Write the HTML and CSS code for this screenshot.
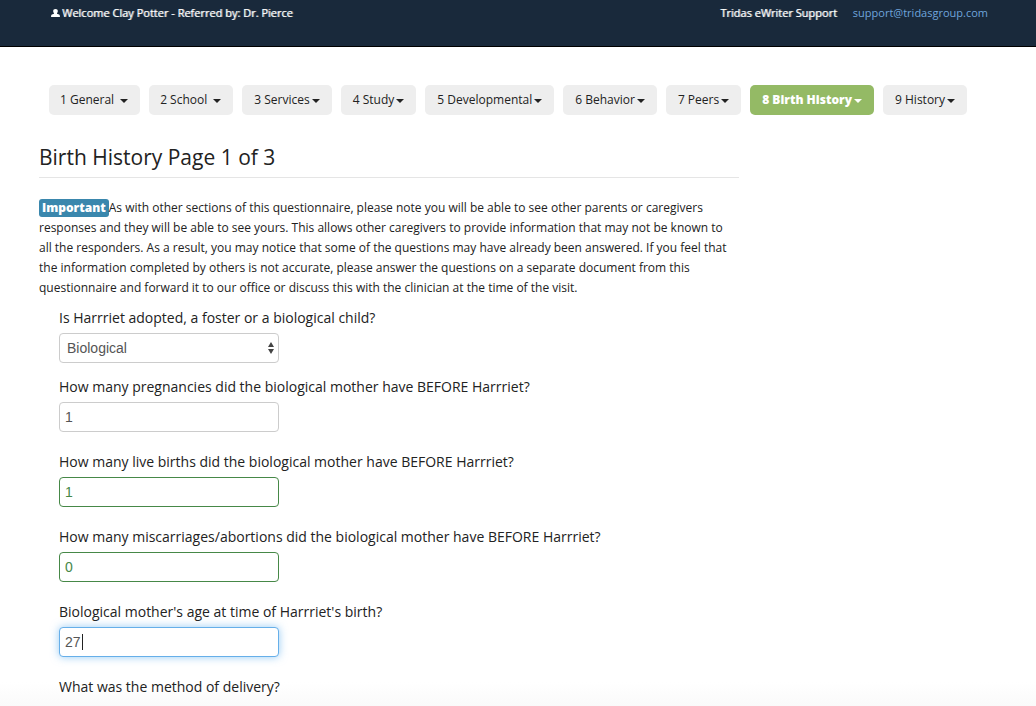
FILE: index.html
```html
<!DOCTYPE html>
<html lang="en">
<head>
<meta charset="utf-8">
<meta name="viewport" content="width=device-width, initial-scale=1">
<title>Birth History</title>
<link rel="stylesheet" href="styles.css">
</head>
<body>
<header class="topbar">
  <div class="welcome">
    <svg class="user-icon" viewBox="0 0 10 9" aria-hidden="true"><path d="M5 0C3.300 0 2.300 1 2.400 2.600c.1 1.200.5 1.700.9 2.200v.6L1 6.300C.3 6.700 0 7.300 0 9h10c0-1.700-.3-2.300-1-2.700L6.700 5.400v-.6c.4-.5.8-1 .9-2.200C7.700 1 6.700 0 5 0z"/></svg>
    <span>Welcome Clay Potter - Referred by: Dr. Pierce</span>
  </div>
  <div class="support">
    <span>Tridas eWriter Support</span>
    <a href="mailto:support@tridasgroup.com">support@tridasgroup.com</a>
  </div>
</header>
<main class="page">
  <nav class="tabs">
    <button type="button" class="tab spaced">1 General<span class="arrow"></span></button>
    <button type="button" class="tab spaced">2 School<span class="arrow"></span></button>
    <button type="button" class="tab">3 Services<span class="arrow"></span></button>
    <button type="button" class="tab">4 Study<span class="arrow"></span></button>
    <button type="button" class="tab">5 Developmental<span class="arrow"></span></button>
    <button type="button" class="tab">6 Behavior<span class="arrow"></span></button>
    <button type="button" class="tab">7 Peers<span class="arrow"></span></button>
    <button type="button" class="tab active">8 Birth History<span class="arrow"></span></button>
    <button type="button" class="tab">9 History<span class="arrow"></span></button>
  </nav>
  <section class="content">
    <h1 class="title">Birth History Page 1 of 3</h1>
    <p class="notice"><strong class="badge">Important</strong>As with other sections of this questionnaire, please note you will be able to see other parents or caregivers responses and they will be able to see yours. This allows other caregivers to provide information that may not be known to all the responders. As a result, you may notice that some of the questions may have already been answered. If you feel that the information completed by others is not accurate, please answer the questions on a separate document from this questionnaire and forward it to our office or discuss this with the clinician at the time of the visit.</p>
    <form class="questions">
      <div class="field select-field">
        <label for="adopted">Is Harrriet adopted, a foster or a biological child?</label>
        <div class="select-wrap">
          <select id="adopted" class="control"><option>Biological</option></select>
          <svg class="stepper" viewBox="0 0 6 12" aria-hidden="true"><path d="M3 0l3 5H0zM3 12l3-5H0z"/></svg>
        </div>
      </div>
      <div class="field">
        <label for="pregnancies">How many pregnancies did the biological mother have BEFORE Harrriet?</label>
        <input id="pregnancies" class="control" type="text" value="1">
      </div>
      <div class="field">
        <label for="births">How many live births did the biological mother have BEFORE Harrriet?</label>
        <input id="births" class="control valid" type="text" value="1">
      </div>
      <div class="field">
        <label for="losses">How many miscarriages/abortions did the biological mother have BEFORE Harrriet?</label>
        <input id="losses" class="control valid" type="text" value="0">
      </div>
      <div class="field">
        <label for="age">Biological mother's age at time of Harrriet's birth?</label>
        <div class="select-wrap">
          <input id="age" class="control focused" type="text" value="27">
          <span class="text-cursor"></span>
        </div>
      </div>
      <div class="question">What was the method of delivery?</div>
    </form>
  </section>
</main>
</body>
</html>
```
FILE: styles.css
```css
* { box-sizing: border-box; }
body {
  margin: 0;
  min-height: 100vh;
  background: linear-gradient(to top, #fafafa, #fff 24px);
  color: #222;
  font: 14px/20px "Open Sans", sans-serif;
}
.topbar {
  display: flex;
  justify-content: space-between;
  height: 47px;
  padding: 3px 48px 0 51px;
  background: #19293b;
  border-bottom: 1px solid #000;
  color: #fff;
  font-size: 11px;
}
.welcome { display: flex; gap: 2px; }
.welcome span, .support span { text-shadow: 1px 0 0 rgba(255, 255, 255, 0.6); }
.user-icon { width: 9px; height: 8px; margin-top: 6px; fill: #fff; }
.support { display: flex; gap: 16px; }
.support a { color: #6fa5dc; text-decoration: none; }
.page { padding: 38px 39px 0; }
.tabs { display: flex; flex-wrap: wrap; gap: 9px; padding-left: 10px; }
.tab {
  display: flex;
  align-items: center;
  height: 30px;
  padding: 0 12px;
  border: 0;
  border-radius: 5px;
  background: #eee;
  color: #222;
  font: 12px/20px "Open Sans", sans-serif;
  white-space: nowrap;
}
.arrow {
  margin: 2px 0 0 2px;
  border: 4px solid transparent;
  border-top-color: currentColor;
  border-bottom: 0;
}
.spaced { padding: 0 12px 0 11px; }
.spaced .arrow { margin-left: 6px; }
.tab.active { background: #94ba65; color: #fff; font-weight: 800; }
.content { max-width: 700px; }
.title {
  margin: 27px 0 19px;
  padding-bottom: 5px;
  border-bottom: 1px solid #e5e5e5;
  font-size: 21px;
  font-weight: 400;
  line-height: 30px;
}
.notice { margin: 0; padding: 1px 8px 0 0; font-size: 12px; }
.badge {
  display: inline-block;
  padding: 0 3px;
  border-radius: 3px;
  background: #3a87ad;
  color: #fff;
  font-weight: 800;
  line-height: 18px;
}
.questions { padding: 10px 0 0 20px; }
.field { display: flex; flex-direction: column; align-items: flex-start; gap: 5px; margin-bottom: 20px; }
.select-field { margin-bottom: 14px; }
.select-wrap { position: relative; }
.control {
  display: block;
  width: 220px;
  height: 30px;
  padding: 4px 5px;
  border: 1px solid #ccc;
  border-radius: 4px;
  background: #fff;
  color: #555;
  font: 14px/20px "Liberation Sans", Arial, sans-serif;
  outline: 0;
}
.control.valid { border-color: #468847; color: #468847; }
.control.focused { border-color: #66afe9; box-shadow: 0 0 8px rgba(82, 168, 236, 0.6); }
select.control { appearance: none; padding-left: 7px; }
.stepper { position: absolute; top: 9px; right: 5px; width: 6px; height: 12px; fill: #444; pointer-events: none; }
.text-cursor { position: absolute; top: 7px; left: 23px; width: 1px; height: 16px; background: #222; pointer-events: none; }
```
